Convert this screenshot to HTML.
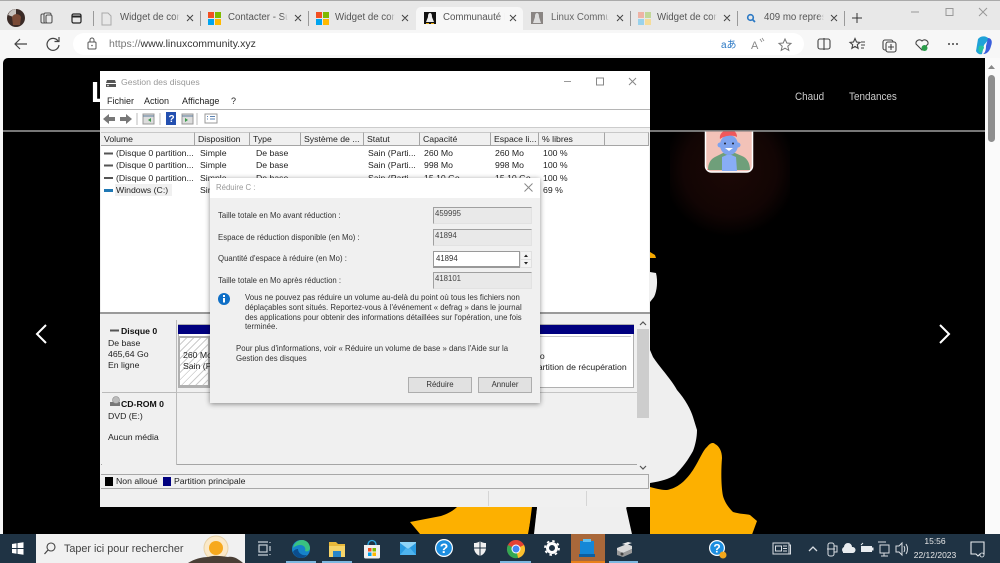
<!DOCTYPE html>
<html><head><meta charset="utf-8"><style>
html,body{margin:0;padding:0;background:#000;}
#r{position:relative;width:1000px;height:563px;overflow:hidden;background:#f7f7f7;font-family:"Liberation Sans",sans-serif;}
.a{position:absolute;}
.t{position:absolute;white-space:nowrap;line-height:12px;height:12px;}
.tab{font-size:9.7px;color:#555;width:60px;overflow:hidden;top:12px;-webkit-mask-image:linear-gradient(90deg,#000 90%,transparent);mask-image:linear-gradient(90deg,#000 90%,transparent);}
.sep{position:absolute;top:11px;width:1px;height:15px;background:#9a9a9a;}
.w{font-size:8.7px;color:#222;}
.d{font-size:7.8px;color:#333;}
.h{position:absolute;top:132px;height:14px;background:#f0f0f0;border-right:1px solid #a5a5a5;border-bottom:1px solid #a5a5a5;border-top:1px solid #c8c8c8;box-sizing:border-box;font-size:8.7px;line-height:13px;color:#222;padding-left:3px;white-space:nowrap;overflow:hidden;}
.fld{position:absolute;left:433px;width:99px;height:17px;background:#e9e9e9;border:1px solid #e2e2e2;border-top-color:#a0a0a0;border-left-color:#a0a0a0;box-sizing:border-box;font-size:7.8px;color:#444;line-height:12px;padding-left:1px;}
.btn{position:absolute;top:377px;height:16px;background:#e1e1e1;border:1px solid #adadad;box-sizing:border-box;font-size:7.8px;color:#333;text-align:center;line-height:14px;}
svg{position:absolute;overflow:visible;}
</style></head><body><div id="r">

<!-- tab strip -->
<div class="a" style="left:0;top:0;width:1000px;height:30px;background:#e8e8e8;border-top:1px solid #aaa;box-sizing:border-box;"></div>
<div class="a" style="left:416px;top:7px;width:107px;height:24px;background:#f7f7f7;border-radius:5px 5px 0 0;"></div>
<div class="a" style="left:0;top:30px;width:1000px;height:28px;background:#f7f7f7;"></div>

<!-- profile -->
<svg style="left:0;top:0" width="1000" height="58">
<circle cx="16" cy="18" r="9" fill="#3a2a26"/><path d="M8 15a9 9 0 0 1 8-6v9z" fill="#c9c4c0"/><path d="M12 17a5 5 0 0 1 9 0l-1 8h-7z" fill="#7a4a36"/>
<g fill="none" stroke="#555" stroke-width="1.1"><rect x="41" y="14" width="7" height="9" rx="1.5"/><rect x="44" y="13" width="7" height="10" rx="1.5" fill="#e8e8e8"/><rect x="46" y="15" width="6" height="8" rx="1.5" fill="#e8e8e8"/></g>
<rect x="72" y="14" width="9" height="9" rx="1.5" fill="none" stroke="#222" stroke-width="1.2"/><path d="M72 16.5h9" stroke="#222" stroke-width="2"/>
<path d="M102 13h6l3 3v9h-9z" fill="none" stroke="#aaa"/>
<g><rect x="208" y="12" width="6" height="6" fill="#f25022"/><rect x="215" y="12" width="6" height="6" fill="#7fba00"/><rect x="208" y="19" width="6" height="6" fill="#00a4ef"/><rect x="215" y="19" width="6" height="6" fill="#ffb900"/></g>
<g><rect x="316" y="12" width="6" height="6" fill="#f25022"/><rect x="323" y="12" width="6" height="6" fill="#7fba00"/><rect x="316" y="19" width="6" height="6" fill="#00a4ef"/><rect x="323" y="19" width="6" height="6" fill="#ffb900"/></g>
<rect x="424" y="12" width="12" height="12" fill="#111"/><path d="M430 13c2 0 2 3 2 4l2 5h-8l2-5c0-1 0-4 2-4z" fill="#eee"/><path d="M426 23h3v1h-3zM431 23h3v1h-3z" fill="#e8a90c"/>
<rect x="531" y="12" width="12" height="12" fill="#8a8583"/><path d="M537 13c2 0 2 3 2 4l2 6h-8l2-6c0-1 0-4 2-4z" fill="#ddd"/>
<g opacity=".6"><rect x="638" y="12" width="6" height="6" fill="#f2917a"/><rect x="645" y="12" width="6" height="6" fill="#a9cc66"/><rect x="638" y="19" width="6" height="6" fill="#66c4ef"/><rect x="645" y="19" width="6" height="6" fill="#ffd566"/></g>
<circle cx="750.5" cy="17.5" r="2.8" fill="none" stroke="#2a78c4" stroke-width="1.6"/><path d="M752.5 19.5l2.5 2.5" stroke="#2a78c4" stroke-width="1.8"/>
<g stroke="#444" stroke-width="1" fill="none">
<path d="M187 15l6 6M193 15l-6 6M295 15l6 6M301 15l-6 6M402 15l6 6M408 15l-6 6M510 15l6 6M516 15l-6 6M617 15l6 6M623 15l-6 6M724 15l6 6M730 15l-6 6M831 15l6 6M837 15l-6 6"/>
<path d="M852 18h10M857 13v10" stroke="#333"/>
</g>
<g stroke="#999" stroke-width="1" fill="none"><path d="M911 12h8"/><rect x="946" y="8.5" width="7" height="7"/><path d="M979 8l8 8M987 8l-8 8"/></g>
<path d="M27 44H15M20 39l-5 5 5 5" fill="none" stroke="#444" stroke-width="1.2"/>
<path d="M58 41a6 6 0 1 0 1 4M59 37v4.500h-4.500" fill="none" stroke="#444" stroke-width="1.2"/>
</svg>

<div class="t tab" style="left:120px">Widget de conn</div>
<div class="t tab" style="left:228px">Contacter - Sup</div>
<div class="t tab" style="left:335px">Widget de conn</div>
<div class="t tab" style="left:443px;width:62px">Communauté Li</div>
<div class="t tab" style="left:551px;width:58px;color:#666">Linux Commun</div>
<div class="t tab" style="left:657px">Widget de conn</div>
<div class="t tab" style="left:764px">409 mo represe</div>
<div class="sep" style="left:93px"></div><div class="sep" style="left:200px"></div><div class="sep" style="left:308px"></div><div class="sep" style="left:630px"></div><div class="sep" style="left:737px"></div><div class="sep" style="left:844px"></div>

<!-- address bar -->
<div class="a" style="left:73px;top:33px;width:731px;height:22px;background:#fff;border-radius:11px;"></div>
<div class="t" style="left:109px;top:38px;font-size:10.5px;color:#333;"><span style="color:#777">https://</span>www.linuxcommunity.xyz</div>
<svg style="left:0;top:30px" width="1000" height="28">
<rect x="88" y="12" width="8" height="7" rx="1" fill="none" stroke="#555"/><path d="M90 12v-2a2 2 0 0 1 4 0v2" fill="none" stroke="#555"/><circle cx="92" cy="15.500" r=".8" fill="#555"/>
<text x="721" y="18" font-family="Liberation Sans, Noto Sans CJK JP, sans-serif" font-size="10" fill="#2a78c4">aあ</text>
<text x="751" y="19" font-family="Liberation Sans" font-size="11" fill="#888">A</text><path d="M760 9l2 3M762 8l2 3" stroke="#888" stroke-width=".8"/>
<path d="M785 9l1.800 4 4.200.4-3.200 2.800 1 4.200-3.800-2.200-3.800 2.200 1-4.200-3.200-2.800 4.200-.4z" fill="none" stroke="#777"/>
<g fill="none" stroke="#444" stroke-width="1.1"><rect x="818" y="9" width="12" height="10" rx="2"/><path d="M824 8v12"/>
<path d="M855 8.500l1.500 3.500 3.500.4-2.700 2.300.8 3.600-3.100-1.900-3.100 1.900.8-3.600-2.700-2.300 3.500-.4zM861 12h4M861 15h4M861 18h3"/>
<rect x="883" y="10" width="10" height="10" rx="2"/><rect x="886" y="12" width="10" height="10" rx="2" fill="#f7f7f7"/><path d="M891 14v6M888 17h6"/>
<path d="M922 20l-6-6a3.500 3.500 0 0 1 6-3 3.500 3.500 0 0 1 6 3z"/></g>
<circle cx="924.500" cy="18" r="3" fill="#2a9d4a"/>
<g fill="#444"><circle cx="949" cy="14" r="1"/><circle cx="953" cy="14" r="1"/><circle cx="957" cy="14" r="1"/></g>
<path d="M978 9c3-4 9-3 11 0l-5 6-2 9c-3 1-5-1-6-3z" fill="#1fa2d8"/><path d="M988 8c3 0 5 3 3 8-1 4-3 8-8 8 2-1 3-4 3-8z" fill="#3a5fdc"/><path d="M979 16c3-1 5 0 5 2l-3 5c-3-1-3-4-2-7z" fill="#27c3a0"/>
</svg>

<!-- page -->
<div class="a" style="left:3px;top:58px;width:982px;height:476px;background:#000;border-radius:5px 0 0 0;overflow:hidden;">
<div class="a" style="left:667px;top:73px;width:120px;height:110px;background:radial-gradient(circle at 50% 35%,#1c0806 0%,#120504 50%,transparent 72%);"></div>
</div>
<svg style="left:0;top:0" width="1000" height="534">
<path d="M650 252l5 3 1 3h-6z" fill="#f5a800"/>
<!-- upper white sliver -->
<path d="M650 272l6 1c2 8 1 18-2 24l-4 5z" fill="#efefef"/>
<!-- belly -->
<path d="M650 350l3 7c8 12 18 22 24 33 8 9 14 20 16 27l4 13c0 8-2 16-4 21-5 9-10 16-18 24-6 4-13 6-25 8z" fill="#efefef"/>
<!-- right foot -->
<path d="M650 487c8 2 12 3 17 3 10-2 18-8 26-20 6-9 10-20 14-23 3-4 6-5 8-3 4 2 7 7 7 14-1 12-1 28 1 38 2 7 6 12 10 16 6 2 14 2 17 3l7 6-7 19h-100z" fill="#fdb000"/>
<!-- left foot -->
<path d="M457 507c-4 4-10 7-16 9l-31 6 10 12h108l5-27z" fill="#fdb000"/>
<!-- centre -->
<path d="M537 507l-3 27h99l-6-27z" fill="#efefef"/>
<path d="M534.500 507l-3.500 27M628.500 507l6 27" stroke="#000" stroke-width="5" fill="none"/>
</svg>
<div class="a" style="left:3px;top:130px;width:982px;height:1.500px;background:#777;"></div>
<div class="t" style="left:91px;top:79px;font-size:29px;line-height:29px;height:29px;font-weight:bold;color:#fff;">L</div>
<div class="t" style="left:795px;top:91px;font-size:11px;color:#ccc;transform-origin:0 50%;transform:scaleX(.9);">Chaud</div>
<div class="t" style="left:849px;top:91px;font-size:11px;color:#ccc;transform-origin:0 50%;transform:scaleX(.9);">Tendances</div>
<svg style="left:0;top:0" width="1000" height="534">
<defs><clipPath id="av"><rect x="700" y="131.500" width="60" height="45"/></clipPath></defs>
<g clip-path="url(#av)">
<rect x="705.500" y="120" width="47" height="52" rx="6" fill="#f2c2b8" stroke="#fff" stroke-width="1.500"/>
<path d="M708 170c0-7 3-11 7-13l8-4h12l7 3c5 2 8 7 8 14z" fill="#6f9f7a"/>
<path d="M722 171v-14l7-3 7 3 1 14z" fill="#88adf5"/>
<ellipse cx="729" cy="145" rx="9" ry="10" fill="#7ea3ee"/><circle cx="720" cy="145" r="2.500" fill="#7ea3ee"/><circle cx="738" cy="145" r="2.500" fill="#7ea3ee"/>
<path d="M720 139c-1-5 3-9 9-9 6 0 8 3 8 7-4-2-11-2-17 2z" fill="#f0585c"/>
<path d="M725 148h8l-4 3z" fill="#fff"/><circle cx="725" cy="143.500" r="1" fill="#223"/><circle cx="733" cy="143.500" r="1" fill="#223"/>
<path d="M708 170c0-1 0-1 0-1" stroke="#f0585c"/>
</g>
<path d="M46 325l-9 9 9 9" fill="none" stroke="#fff" stroke-width="2"/>
<path d="M940 325l9 9-9 9" fill="none" stroke="#fff" stroke-width="2"/>
</svg>

<!-- browser scrollbar -->
<div class="a" style="left:985px;top:58px;width:15px;height:476px;background:#fafafa;"></div>
<div class="a" style="left:988px;top:75px;width:7px;height:67px;background:#8e8e8e;border-radius:4px;"></div>
<svg style="left:0;top:0" width="1000" height="70"><path d="M988 69l3.500-4 3.500 4z" fill="#888"/></svg>

<!-- Disk management window -->
<div class="a" style="left:100px;top:71px;width:550px;height:436px;background:#f0f0f0;"></div>
<div class="a" style="left:100px;top:71px;width:550px;height:38px;background:#fff;"></div>
<div class="a" style="left:100px;top:109px;width:550px;height:1px;background:#b5b5b5;"></div>
<div class="a" style="left:100px;top:110px;width:550px;height:17px;background:#fff;"></div>
<div class="a" style="left:100px;top:127px;width:550px;height:5px;background:#f0f0f0;border-top:1px solid #ccc;box-sizing:border-box;"></div>
<div class="a" style="left:101px;top:146px;width:548px;height:166px;background:#fff;"></div>

<div class="t" style="left:121px;top:76px;font-size:8.7px;color:#999;">Gestion des disques</div>
<div class="t w" style="left:107px;top:95px;font-size:9px">Fichier</div>
<div class="t w" style="left:144px;top:95px;font-size:9px">Action</div>
<div class="t w" style="left:182px;top:95px;font-size:9px">Affichage</div>
<div class="t w" style="left:231px;top:95px;font-size:9px">?</div>

<svg style="left:0;top:0" width="660" height="130">
<path d="M107 80h8l1 3h-10zM106 84h10v3h-10z" fill="#555"/><circle cx="108" cy="85.500" r=".8" fill="#fff"/>
<g fill="none" stroke="#bbb" stroke-width="1"><path d="M564 81.500h7" stroke="#999"/><rect x="596.500" y="78" width="7" height="7" stroke="#888"/><path d="M629 78l7 7M636 78l-7 7" stroke="#888"/></g>
<path d="M103 119l6-5v3h6v4h-6v3z" fill="#777"/><path d="M132 119l-6-5v3h-6v4h6v3z" fill="#777"/>
<path d="M137 113v12M160 113v12M197 113v12" stroke="#bbb"/>
<rect x="143" y="114" width="11" height="10" fill="#ddd" stroke="#999"/><path d="M143 116h11" stroke="#5a7a9a"/><path d="M151 118l-3 2 3 2z" fill="#3a9a4a"/>
<rect x="166" y="112" width="10" height="13" fill="#2450b0"/><text x="168.500" y="122" font-size="10" font-weight="bold" fill="#fff" font-family="Liberation Sans">?</text>
<rect x="182" y="114" width="11" height="10" fill="#ddd" stroke="#999"/><path d="M182 116h11" stroke="#5a7a9a"/><path d="M185 118l3 2-3 2z" fill="#3a9a4a"/>
<rect x="205" y="114" width="12" height="9" fill="#fff" stroke="#999"/><path d="M207 116.500h1M210 116.500h5M207 119h1M210 119h5" stroke="#5a80b0"/>
</svg>

<div class="h" style="left:101px;width:94px;">Volume</div>
<div class="h" style="left:195px;width:55px;">Disposition</div>
<div class="h" style="left:250px;width:51px;">Type</div>
<div class="h" style="left:301px;width:63px;">Système de ...</div>
<div class="h" style="left:364px;width:56px;">Statut</div>
<div class="h" style="left:420px;width:71px;">Capacité</div>
<div class="h" style="left:491px;width:48px;">Espace li...</div>
<div class="h" style="left:539px;width:66px;">% libres</div>
<div class="h" style="left:605px;width:44px;"></div>

<div class="a" style="left:115px;top:184px;width:57px;height:12px;background:#f0f0f0;"></div>
<svg style="left:0;top:0" width="120" height="200"><path d="M104 152.500h9v2h-9zM104 164.500h9v2h-9zM104 177h9v2h-9z" fill="#555"/><path d="M104 189h9v3h-9z" fill="#1f78b4"/></svg>
<div class="t w" style="left:116px;top:147px;">(Disque 0 partition...</div><div class="t w" style="left:200px;top:147px;">Simple</div><div class="t w" style="left:256px;top:147px;">De base</div><div class="t w" style="left:368px;top:147px;">Sain (Parti...</div><div class="t w" style="left:424px;top:147px;">260 Mo</div><div class="t w" style="left:495px;top:147px;">260 Mo</div><div class="t w" style="left:543px;top:147px;">100 %</div>
<div class="t w" style="left:116px;top:159px;">(Disque 0 partition...</div><div class="t w" style="left:200px;top:159px;">Simple</div><div class="t w" style="left:256px;top:159px;">De base</div><div class="t w" style="left:368px;top:159px;">Sain (Parti...</div><div class="t w" style="left:424px;top:159px;">998 Mo</div><div class="t w" style="left:495px;top:159px;">998 Mo</div><div class="t w" style="left:543px;top:159px;">100 %</div>
<div class="t w" style="left:116px;top:172px;">(Disque 0 partition...</div><div class="t w" style="left:200px;top:172px;">Simple</div><div class="t w" style="left:256px;top:172px;">De base</div><div class="t w" style="left:368px;top:172px;">Sain (Parti...</div><div class="t w" style="left:424px;top:172px;">15,10 Go</div><div class="t w" style="left:495px;top:172px;">15,10 Go</div><div class="t w" style="left:543px;top:172px;">100 %</div>
<div class="t w" style="left:116px;top:184px;">Windows (C:)</div><div class="t w" style="left:200px;top:184px;">Simple</div><div class="t w" style="left:543px;top:184px;">69 %</div>

<!-- splitter + lower -->
<div class="a" style="left:100px;top:312px;width:550px;height:6px;background:#f0f0f0;border-top:2px solid #9a9a9a;box-sizing:border-box;"></div>
<div class="a" style="left:101px;top:318px;width:536px;height:147px;background:#f0f0f0;border-bottom:1px solid #a5a5a5;box-sizing:border-box;"></div>
<div class="a" style="left:102px;top:320px;width:75px;height:73px;background:#f0f0f0;border-right:1px solid #bbb;border-bottom:1px solid #bbb;box-sizing:border-box;"></div>
<div class="a" style="left:102px;top:393px;width:75px;height:72px;background:#f0f0f0;border-right:1px solid #bbb;box-sizing:border-box;"></div>
<div class="a" style="left:177px;top:392px;width:460px;height:1px;background:#c4c4c4;"></div>
<div class="t w" style="left:121px;top:325px;font-weight:bold;color:#111;">Disque 0</div>
<div class="t w" style="left:108px;top:337px;">De base</div>
<div class="t w" style="left:108px;top:348px;">465,64 Go</div>
<div class="t w" style="left:108px;top:359px;">En ligne</div>
<div class="t w" style="left:121px;top:398px;font-weight:bold;color:#111;">CD-ROM 0</div>
<div class="t w" style="left:108px;top:410px;">DVD (E:)</div>
<div class="t w" style="left:108px;top:431px;">Aucun média</div>
<svg style="left:0;top:0" width="130" height="420"><path d="M110 329.500h9v2h-9z" fill="#555"/><path d="M110 402h10v4h-10z" fill="#777"/><circle cx="116" cy="400" r="3.500" fill="#bbb" stroke="#888" stroke-width=".6"/></svg>

<div class="a" style="left:178px;top:324px;width:456px;height:64px;background:#fff;border:1px solid #b0b0b0;box-sizing:border-box;"></div>
<div class="a" style="left:178px;top:325px;width:456px;height:9px;background:#00007f;"></div>
<div class="a" style="left:178px;top:336px;width:32px;height:51px;border:2px solid #b0b0b0;box-sizing:border-box;background:repeating-linear-gradient(135deg,#fff 0 4px,#ccc 4px 5px);"></div>
<div class="t w" style="left:183px;top:349px;">260 Mo</div>
<div class="t w" style="left:183px;top:360px;">Sain (P</div>
<div class="a" style="left:540px;top:336px;width:91px;height:1px;background:#c8c8c8;"></div>
<div class="t w" style="left:538px;top:350px;">io</div>
<div class="t w" style="left:532px;top:361px;width:98px;overflow:hidden;">Partition de récupération</div>

<!-- v scrollbar -->
<div class="a" style="left:637px;top:318px;width:12px;height:156px;background:#f0f0f0;"></div>
<div class="a" style="left:637px;top:329px;width:12px;height:89px;background:#cdcdcd;"></div>
<svg style="left:0;top:0" width="660" height="480"><path d="M640 325l3-3 3 3M640 466l3 3 3-3" fill="none" stroke="#555" stroke-width="1.200"/></svg>

<!-- legend -->
<div class="a" style="left:101px;top:474px;width:548px;height:15px;background:#f0f0f0;border:1px solid #a8a8a8;border-width:1px 1px 1px 0;box-sizing:border-box;"></div>
<div class="a" style="left:105px;top:477px;width:8px;height:9px;background:#000;"></div>
<div class="t w" style="left:116px;top:475px;">Non alloué</div>
<div class="a" style="left:163px;top:477px;width:8px;height:9px;background:#00007f;"></div>
<div class="t w" style="left:174px;top:475px;">Partition principale</div>
<div class="a" style="left:488px;top:491px;width:1px;height:15px;background:#d5d5d5;"></div>
<div class="a" style="left:586px;top:491px;width:1px;height:15px;background:#d5d5d5;"></div>

<!-- Dialog -->
<div class="a" style="left:210px;top:178px;width:330px;height:225px;background:#f0f0f0;box-shadow:0 1px 5px rgba(0,0,0,.45);"></div>
<div class="a" style="left:210px;top:178px;width:330px;height:20px;background:#fff;"></div>
<div class="t d" style="left:216px;top:182px;color:#999;">Réduire C :</div>
<svg style="left:0;top:0" width="560" height="310"><path d="M524.500 183.500l8 8M532.500 183.500l-8 8" stroke="#888" fill="none"/></svg>
<div class="t d" style="left:218px;top:210px;">Taille totale en Mo avant réduction :</div>
<div class="t d" style="left:218px;top:232px;">Espace de réduction disponible (en Mo) :</div>
<div class="t d" style="left:218px;top:253px;">Quantité d'espace à réduire (en Mo) :</div>
<div class="t d" style="left:218px;top:275px;">Taille totale en Mo après réduction :</div>
<div class="fld" style="top:207px">459995</div>
<div class="fld" style="top:229px">41894</div>
<div class="fld" style="top:272px">418101</div>
<div class="a" style="left:433px;top:251px;width:87px;height:17px;background:#fff;border:1px solid #999;border-width:1px 1px 2px 1px;box-sizing:border-box;font-size:7.8px;line-height:13px;color:#333;padding-left:2px;">41894</div>
<div class="a" style="left:520px;top:251px;width:12px;height:17px;background:#e0e0e0;"></div>
<svg style="left:0;top:0" width="560" height="310"><rect x="521" y="252" width="10" height="7" fill="#f3f3f3"/><rect x="521" y="260" width="10" height="7" fill="#f3f3f3"/><path d="M524 257l2-2.500 2 2.500zM524 262l2 2.500 2-2.500z" fill="#222"/>
<circle cx="224" cy="299" r="6" fill="#0f6fc6"/><rect x="223" y="298" width="2" height="4.500" fill="#fff"/><rect x="223" y="295" width="2" height="2" fill="#fff"/></svg>
<div class="t d" style="left:245px;top:292px;">Vous ne pouvez pas réduire un volume au-delà du point où tous les fichiers non</div>
<div class="t d" style="left:245px;top:302px;">déplaçables sont situés. Reportez-vous à l'événement « defrag » dans le journal</div>
<div class="t d" style="left:245px;top:312px;">des applications pour obtenir des informations détaillées sur l'opération, une fois</div>
<div class="t d" style="left:245px;top:321px;">terminée.</div>
<div class="t d" style="left:236px;top:343px;">Pour plus d'informations, voir « Réduire un volume de base » dans l'Aide sur la</div>
<div class="t d" style="left:236px;top:353px;">Gestion des disques</div>
<div class="btn" style="left:408px;width:64px;">Réduire</div>
<div class="btn" style="left:478px;width:54px;">Annuler</div>

<!-- Taskbar -->
<div class="a" style="left:0;top:534px;width:1000px;height:29px;background:#1f3344;"></div>
<div class="a" style="left:36px;top:534px;width:209px;height:29px;background:#f1f1f1;"></div>
<div class="t" style="left:64px;top:543px;font-size:10.8px;color:#444;">Taper ici pour rechercher</div>
<div class="a" style="left:571px;top:534px;width:34px;height:29px;background:#a9683a;"></div>
<div class="a" style="left:571px;top:561px;width:34px;height:2px;background:#e8801a;"></div>
<div class="a" style="left:286px;top:561px;width:30px;height:2px;background:#7db8e0;"></div>
<div class="a" style="left:322px;top:561px;width:30px;height:2px;background:#7db8e0;"></div>
<div class="a" style="left:500px;top:561px;width:31px;height:2px;background:#7db8e0;"></div>
<div class="a" style="left:609px;top:561px;width:29px;height:2px;background:#7db8e0;"></div>
<div class="t" style="left:915px;top:535px;width:40px;text-align:center;font-size:8.5px;color:#e8e8e8;">15:56</div>
<div class="t" style="left:910px;top:549px;width:50px;text-align:center;font-size:8.5px;color:#e8e8e8;">22/12/2023</div>
<svg style="left:0;top:534px" width="1000" height="29">
<path d="M12 10l4.500-.7v4.700h-4.500zM17.500 9.100l6-.9v5.800h-6zM12 15h4.500v4.700l-4.500-.7zM17.500 15h6v5.800l-6-.9z" fill="#fff"/>
<circle cx="51" cy="13" r="4" fill="none" stroke="#444" stroke-width="1.100"/><path d="M48 16l-3.500 4" stroke="#444" stroke-width="1.200"/>
<circle cx="216" cy="14" r="12" fill="#fbe9c8" stroke="#e8d2a8"/><circle cx="216" cy="14" r="7" fill="#f7a91e"/>
<path d="M188 29c6-4 14-6 20-6 6-2 14-1 20 0 6-1 10 2 15 6z" fill="#4a3f36"/>
<g stroke="#c8d0d8" fill="none" stroke-width="1.200"><rect x="259" y="11" width="8" height="7"/><path d="M258 8h10M258 21h10M270 8v1M270 12v5M270 20v1"/></g>
<circle cx="301" cy="15" r="9" fill="#1683c9"/><path d="M293 14c1-6 6-8 9-8 5 0 8 4 8 8 0 3-3 4-5 3 1-2 0-6-5-6-4 0-7 3-7 3z" fill="#39c281"/><path d="M298 15c0 4 4 7 9 6-2 2-4 3-6 3-4 0-7-3-8-6 1-2 3-3 5-3z" fill="#0b4d8c"/>
<path d="M329 8h7l2 2h7v3h-16z" fill="#e8b83a"/><rect x="329" y="12" width="16" height="11" fill="#f6d469"/><rect x="333" y="17" width="8" height="6" fill="#2a86c8"/>
<path d="M364 11h16v12a1.500 1.500 0 0 1-1.500 1.500h-13a1.500 1.500 0 0 1-1.500-1.500z" fill="#f0f0f0"/><path d="M368 11c0-6 8-6 8 0" fill="none" stroke="#2aa7e0" stroke-width="1.300"/><rect x="368" y="14" width="3.500" height="3.500" fill="#f25022"/><rect x="372.500" y="14" width="3.500" height="3.500" fill="#7fba00"/><rect x="368" y="18.500" width="3.500" height="3.500" fill="#00a4ef"/><rect x="372.500" y="18.500" width="3.500" height="3.500" fill="#ffb900"/>
<rect x="400" y="9" width="16" height="12" fill="#2a9ae0"/><path d="M400 9l8 6 8-6v-1h-16z" fill="#8fd4f7"/><path d="M400 21l6-7 2 1.500 2-1.500 6 7z" fill="#4fb4ee"/>
<circle cx="444" cy="14" r="9" fill="#fff"/><circle cx="444" cy="14" r="7.800" fill="#1c8ee0"/><text x="444" y="19" text-anchor="middle" font-family="Liberation Sans" font-size="14" font-weight="bold" fill="#fff">?</text>
<path d="M474 9c3 0 5-1 6-2 1 1 3 2 6 2v5c0 4-3 7-6 8-3-1-6-4-6-8z" fill="#f0f0f0"/><path d="M480 7v15M474 14h12" stroke="#1f3344" stroke-width="1"/>
<circle cx="516" cy="15" r="9" fill="#e34133"/><path d="M516 15l8-4a9 9 0 0 1-6 13z" fill="#fbc02d"/><path d="M516 15l2 9a9 9 0 0 1-10-13z" fill="#34a853"/><circle cx="516" cy="15" r="4.500" fill="#fff"/><circle cx="516" cy="15" r="3.500" fill="#4285f4"/>
<circle cx="552" cy="14" r="4.500" fill="none" stroke="#fff" stroke-width="3"/><circle cx="552" cy="14" r="7" fill="none" stroke="#fff" stroke-width="1.800" stroke-dasharray="2.500 3"/>
<rect x="580" y="7" width="14" height="14" fill="#1487d6"/><path d="M583 5h8v3h-8z" fill="#5fc0f0"/><path d="M579 20h16v3h-16z" fill="#0d5fa0"/>
<path d="M617 14l10-4 5 2v3l-9 4-6-2z" fill="#d8d8d8"/><path d="M617 16v5l6 2 9-4v-4l-9 4z" fill="#9a9a9a"/><circle cx="622" cy="20" r="1.500" fill="#444"/><path d="M622 10l6-2 4 1-6 2z" fill="#eee"/>
<circle cx="717" cy="14" r="8" fill="#fff"/><circle cx="717" cy="14" r="6.800" fill="#1c8ee0"/><text x="717" y="18.500" text-anchor="middle" font-family="Liberation Sans" font-size="12" font-weight="bold" fill="#fff">?</text><circle cx="723" cy="21" r="3.500" fill="#f2a71b"/>
<g fill="none" stroke="#d8dde2" stroke-width="1"><path d="M773 9h16v11h-16zM789 11h1.500v9h-2"/><rect x="775.500" y="12" width="6" height="5"/><path d="M783 12h4M783 14.500h4M783 17h4"/>
<path d="M809 17l4-4 4 4" stroke-width="1.300"/>
<rect x="828" y="9" width="6" height="13" rx="2"/><path d="M834 12h3v6h-3M827 15h8"/></g>
<path d="M843 18a3 3 0 0 1 1-5 4 4 0 0 1 8 0 3 3 0 0 1 1 6h-10z" fill="#e8ecef"/>
<rect x="861" y="12" width="11" height="6" fill="#e8ecef"/><rect x="872" y="13.500" width="1.500" height="3" fill="#e8ecef"/><path d="M861 11l2-2" stroke="#e8ecef"/>
<g fill="none" stroke="#d8dde2" stroke-width="1"><rect x="880" y="11" width="9" height="8"/><path d="M884 19v3M881 22h7M878 8h8"/></g>
<g fill="none" stroke="#d8dde2" stroke-width="1"><path d="M896 12h3l3-3v12l-3-3h-3zM904 12c1 2 1 4 0 6M906 10c2 3 2 7 0 10"/></g>
<path d="M970 8h13v12h-4l-2 2-2-2h-5z" transform="translate(1,0)" fill="none" stroke="#e8ecef" stroke-width="1.100"/><circle cx="982" cy="21" r="2" fill="#1f3344" stroke="#e8ecef" stroke-width=".8"/>
</svg>
</div></body></html>
